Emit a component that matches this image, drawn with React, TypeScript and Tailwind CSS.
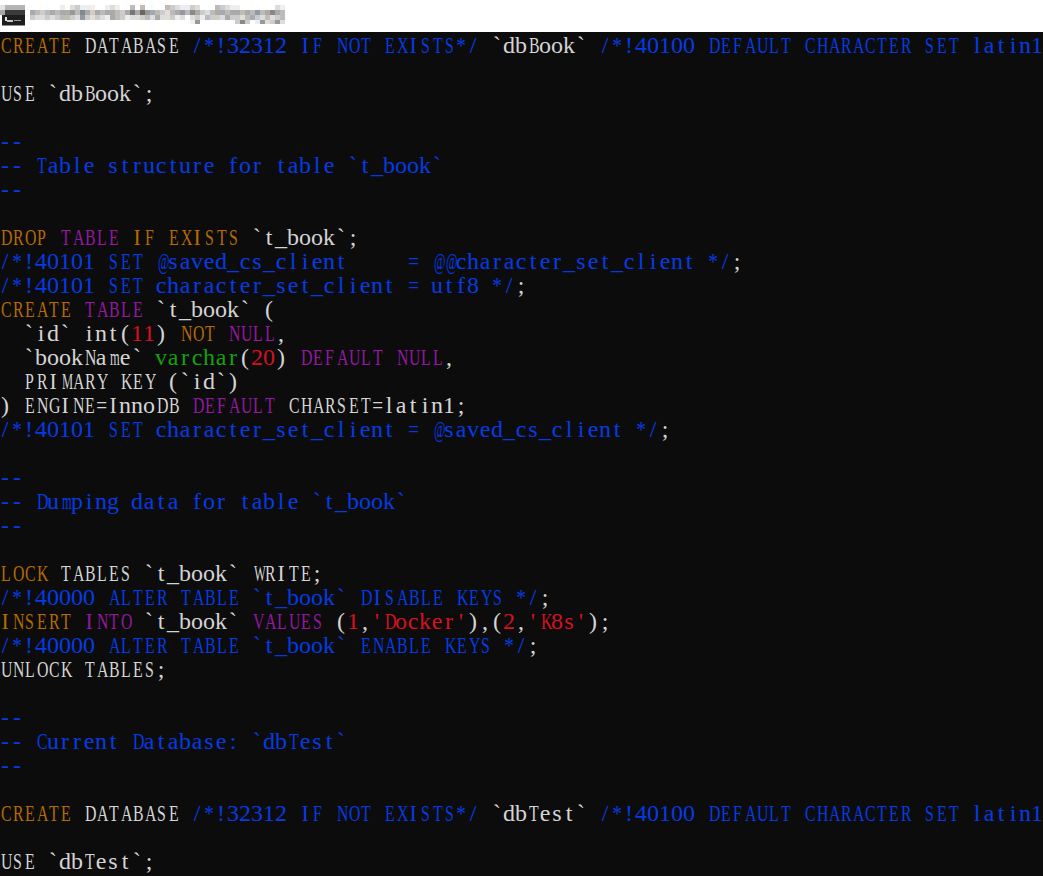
const O = "text-[#b46a00]";
const W = "text-[#d4d4d4]";
const B = "text-[#063be4]";
const P = "text-[#92199f]";
const R = "text-[#d81022]";
const G = "text-[#13a10e]";

type Seg = [string, string];
const lines: Seg[][] = [
  [["CREATE", O], [" DATABASE ", W], ["/*!32312 IF NOT EXISTS*/ ", B], ["`dbBook` ", W], ["/*!40100 DEFAULT CHARACTER SET latin1", B]],
  [],
  [["USE `dbBook`;", W]],
  [],
  [["--", B]],
  [["-- Table structure for table `t_book`", B]],
  [["--", B]],
  [],
  [["DROP", O], [" ", W], ["TABLE", P], [" ", W], ["IF EXISTS", O], [" `t_book`;", W]],
  [["/*!40101 SET @saved_cs_client     = @@character_set_client */", B], [";", W]],
  [["/*!40101 SET character_set_client = utf8 */", B], [";", W]],
  [["CREATE", O], [" ", W], ["TABLE", P], [" `t_book` (", W]],
  [["  `id` int(", W], ["11", R], [") ", W], ["NOT", O], [" ", W], ["NULL", P], [",", W]],
  [["  `bookName` ", W], ["varchar", G], ["(", W], ["20", R], [") ", W], ["DEFAULT NULL", P], [",", W]],
  [["  PRIMARY KEY (`id`)", W]],
  [[") ENGINE=InnoDB ", W], ["DEFAULT", P], [" CHARSET=latin1;", W]],
  [["/*!40101 SET character_set_client = @saved_cs_client */", B], [";", W]],
  [],
  [["--", B]],
  [["-- Dumping data for table `t_book`", B]],
  [["--", B]],
  [],
  [["LOCK", O], [" TABLES `t_book` WRITE;", W]],
  [["/*!40000 ALTER TABLE `t_book` DISABLE KEYS */", B], [";", W]],
  [["INSERT", O], [" ", W], ["INTO", P], [" `t_book` ", W], ["VALUES", P], [" (", W], ["1", R], [",", W], ["'Docker'", R], ["),(", W], ["2", R], [",", W], ["'K8s'", R], [");", W]],
  [["/*!40000 ALTER TABLE `t_book` ENABLE KEYS */", B], [";", W]],
  [["UNLOCK TABLES;", W]],
  [],
  [["--", B]],
  [["-- Current Database: `dbTest`", B]],
  [["--", B]],
  [],
  [["CREATE", O], [" DATABASE ", W], ["/*!32312 IF NOT EXISTS*/ ", B], ["`dbTest` ", W], ["/*!40100 DEFAULT CHARACTER SET latin1", B]],
  [],
  [["USE `dbTest`;", W]],
];

// Pixelated title: one hex digit per 5px cell (grey level), four rows.
const mosaicRows: [number, number, string][] = [
  [5, 5, "ffffffefdceeeffedeffbfbffffbcdeecdfffbcdeefffffffde"],
  [10, 5, "abcbabaa9b8acabaabca7a69abcdba9b8acdbaabaabab9ba8ab"],
  [15, 5, "cddcdcbbcd9cdcdeabceddcbdaddcedfdcebccdaccdbacdbdcb"],
  [20, 4, "ffffffffffffffffffffffffffffffffe9fffffffc8cfe9dc9d"],
];
const cellFill = (d: string, i: number) => {
  const v = parseInt(d, 16) * 17;
  const warm = i % 5 === 2 ? 6 : i % 7 === 3 ? -6 : 0;
  return `rgb(${Math.min(255, v + warm)},${v},${Math.min(255, v - warm)})`;
};

const glyphClass = (c: string) => {
  if (/[WM@m]/.test(c)) return "inline-block w-[12px] text-center scale-x-[0.52]";
  if (/[A-Zw]/.test(c) && !/[IJ]/.test(c)) return "inline-block w-[12px] text-center scale-x-[0.66]";
  if (/[=*]/.test(c)) return "inline-block w-[12px] text-center scale-x-[0.8]";
  if (/[IJ]/.test(c)) return "inline-block w-[12px] text-center scale-x-[0.9]";
  return "inline-block w-[12px] text-center";
};

function Glyph({ c }: { c: string }) {
  if (c === " ") return <span className="inline-block w-[12px]">{" "}</span>;
  return <span className={glyphClass(c)}>{c}</span>;
}

export default function App() {
  return (
    <div className="w-[1043px] h-[876px] overflow-hidden bg-[#0c0c0c] flex flex-col">
      <div className="h-[32px] shrink-0 bg-white flex">
        <svg width="285" height="32" viewBox="0 0 285 32" shapeRendering="crispEdges">
          <rect x="0" y="5" width="5" height="5" fill="#e4e4e4" />
          <rect x="5" y="5" width="20" height="5" fill="#b4b4b6" />
          <rect x="0" y="10" width="5" height="5" fill="#a6a6a6" />
          <rect x="5" y="10" width="20" height="5" fill="#3a3a3a" />
          <rect x="2" y="15" width="23" height="11" fill="#1e1e1e" />
          <rect x="2" y="25" width="23" height="1" fill="#8c8c8c" />
          <rect x="5" y="17" width="2" height="4" fill="#e0e0e0" />
          <rect x="7" y="20" width="6" height="2" fill="#c8c8c8" />
          <rect x="14" y="20" width="7" height="1" fill="#9a9a9a" />
          {mosaicRows.map(([y, h, row]) =>
            row.split("").map((d, i) => (
              <rect key={`${y}-${i}`} x={30 + i * 5} y={y} width={5} height={h} fill={cellFill(d, i)} />
            )),
          )}
        </svg>
      </div>
      <div className="-ml-[1px] pt-[1px] font-['Liberation_Serif',serif] text-[24px] leading-[24px] whitespace-pre font-normal">
        {lines.map((l, i) => (
          <div key={i} className="h-[24px]">
            {l.map(([t, c], j) => (
              <span key={j} className={c}>
                {t.split("").map((ch, k) => (
                  <Glyph key={k} c={ch} />
                ))}
              </span>
            ))}
          </div>
        ))}
      </div>
    </div>
  );
}
